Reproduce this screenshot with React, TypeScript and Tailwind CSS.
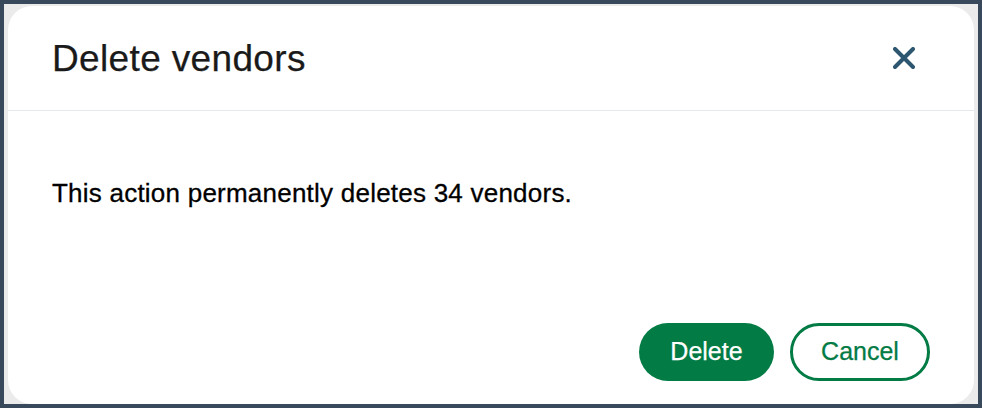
import React from 'react';

export default function App() {
    return (
        <div className="w-[982px] h-[408px] bg-[#37495a] p-1 font-['Liberation_Sans',Arial,sans-serif]">
            <div className="h-full bg-[#ebebeb] pl-1 pr-1 pt-0.5">
                {/* Dialog */}
                <div className="h-full bg-white rounded-[24px] flex flex-col overflow-hidden">
                    <div className="h-[105px] shrink-0 flex items-center justify-between pl-[44px] pr-[59px] border-b border-[#e6e9ec]">
                        <h1 className="text-[37px] text-[#1a1a1a] leading-none tracking-[0.35px] [-webkit-text-stroke:0.25px_#1a1a1a]">Delete vendors</h1>
                        <button aria-label="Close" className="w-[22px] h-[22px] flex items-center justify-center">
                            <svg width="22" height="22" viewBox="0 0 22 22" fill="none">
                                <path d="M2 2 L20 20 M20 2 L2 20" stroke="#2d5670" strokeWidth="4" strokeLinecap="round" />
                            </svg>
                        </button>
                    </div>
                    <div className="flex-1 pl-[44px] pt-[67px]">
                        <p className="text-[26px] text-black leading-[30px] tracking-[0.23px] [-webkit-text-stroke:0.3px_#000]">This action permanently deletes 34 vendors.</p>
                    </div>
                    <div className="flex justify-end gap-4 pr-[44px] pb-[23px]">
                        <button className="h-[58px] w-[135px] rounded-full bg-[#037b45] text-white text-[25px] [-webkit-text-stroke:0.25px_#fff]">Delete</button>
                        <button className="h-[58px] w-[140px] rounded-full border-[3px] border-[#037b45] text-[#037b45] text-[25px] [-webkit-text-stroke:0.25px_#037b45]">Cancel</button>
                    </div>
                </div>
            </div>
        </div>
    );
}
